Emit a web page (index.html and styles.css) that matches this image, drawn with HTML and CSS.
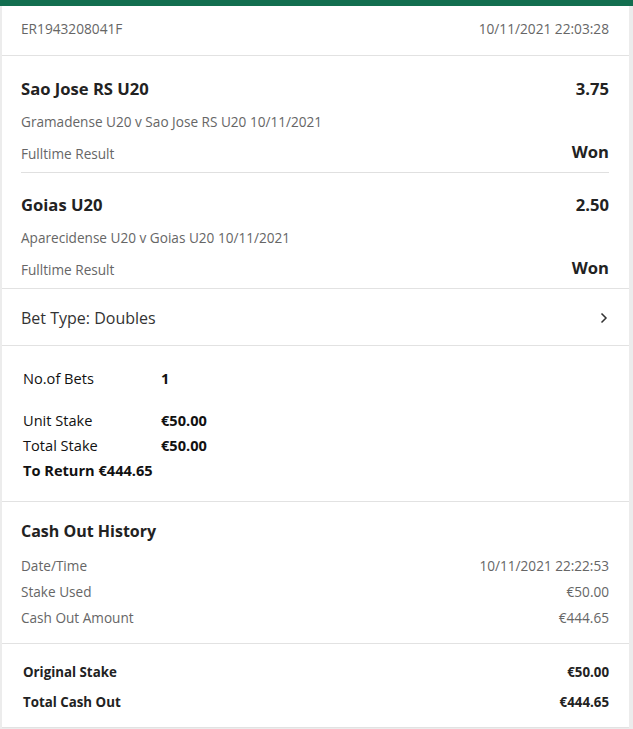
FILE: index.html
```html
<!DOCTYPE html>
<html>
<head>
<meta charset="utf-8">
<link rel="stylesheet" href="styles.css">
</head>
<body>
<div class="topbar"></div>
<div class="card">
  <div class="head">
    <span>ER1943208041F</span>
    <span>10/11/2021 22:03:28</span>
  </div>
  <div class="selections">
    <div class="sel">
      <div class="row"><span class="team">Sao Jose RS U20</span><span class="odds">3.75</span></div>
      <div class="sub">Gramadense U20 v Sao Jose RS U20 10/11/2021</div>
      <div class="row res"><span class="market">Fulltime Result</span><span class="won">Won</span></div>
    </div>
    <div class="sel">
      <div class="row"><span class="team">Goias U20</span><span class="odds">2.50</span></div>
      <div class="sub">Aparecidense U20 v Goias U20 10/11/2021</div>
      <div class="row res"><span class="market">Fulltime Result</span><span class="won">Won</span></div>
    </div>
  </div>
  <div class="bettype">
    <span>Bet Type: Doubles</span>
    <svg class="chev" width="8" height="12" viewBox="0 0 8 12"><polyline points="1.5,1.5 6,6 1.5,10.5" fill="none" stroke="#333" stroke-width="1.5"/></svg>
  </div>
  <div class="summary">
    <div class="srow nob"><span class="lbl">No.of Bets</span><span class="val">1</span></div>
    <div class="srow"><span class="lbl">Unit Stake</span><span class="val">€50.00</span></div>
    <div class="srow"><span class="lbl">Total Stake</span><span class="val">€50.00</span></div>
    <div class="srow ret">To Return €444.65</div>
  </div>
  <div class="history">
    <div class="htitle">Cash Out History</div>
    <div class="hrow"><span>Date/Time</span><span>10/11/2021 22:22:53</span></div>
    <div class="hrow"><span>Stake Used</span><span>€50.00</span></div>
    <div class="hrow"><span>Cash Out Amount</span><span>€444.65</span></div>
  </div>
  <div class="totals">
    <div class="trow"><span>Original Stake</span><span>€50.00</span></div>
    <div class="trow"><span>Total Cash Out</span><span>€444.65</span></div>
  </div>
</div>
</body>
</html>
```

FILE: styles.css
```css
html, body {
  margin: 0;
  padding: 0;
  background: #ececec;
  font-family: "Open Sans", "Noto Sans", sans-serif;
}
.topbar {
  height: 6px;
  background: #126e4f;
}
.card {
  background: #fff;
  margin: 0 4px 0 2px;
  border-bottom: 1px solid #e2e2e2;
}
.card > div {
  border-bottom: 1px solid #e2e2e2;
  padding-left: 19px;
  padding-right: 20px;
}
.card > div:last-child {
  border-bottom: none;
}
.head {
  height: 50px;
  box-sizing: border-box;
  padding-bottom: 5px;
  display: flex;
  justify-content: space-between;
  align-items: center;
  font-size: 13.7px;
  color: #666;
}
.sel {
  padding: 21px 0 9px;
  border-bottom: 1px solid #e0e0e0;
}
.sel:last-child {
  border-bottom: none;
  padding-top: 20px;
  padding-bottom: 9px;
}
.row {
  display: flex;
  justify-content: space-between;
  align-items: center;
}
.team, .odds {
  font-size: 16.6px;
  font-weight: 700;
  color: #222;
  line-height: 24px;
}
.sub {
  font-size: 13.6px;
  color: #666;
  line-height: 20px;
  margin-top: 11px;
}
.res {
  margin-top: 11px;
  height: 20px;
}
.market {
  font-size: 13.6px;
  color: #666;
}
.won {
  font-size: 16.6px;
  font-weight: 700;
  color: #222;
  margin-top: -4px;
}
.bettype {
  height: 57px;
  box-sizing: border-box;
  padding-top: 2px;
  display: flex;
  justify-content: space-between;
  align-items: center;
  font-size: 16px;
  color: #333;
}
.chev {
  margin-right: 1px;
}
.summary {
  padding-top: 20px;
  padding-bottom: 18px;
  font-size: 14.6px;
  color: #111;
}
.srow {
  display: flex;
  line-height: 25px;
  padding-left: 2px;
}
.srow.nob {
  margin-bottom: 17px;
}
.lbl {
  width: 138px;
}
.val {
  font-weight: 700;
}
.ret {
  font-weight: 700;
}
.history {
  padding-top: 17px;
  padding-bottom: 12px;
}
.htitle {
  font-size: 16px;
  font-weight: 700;
  color: #222;
  line-height: 24px;
  margin-bottom: 10px;
}
.hrow {
  display: flex;
  justify-content: space-between;
  font-size: 13.6px;
  color: #666;
  line-height: 26px;
}
.totals {
  padding-top: 13px;
  padding-bottom: 10px;
}
.trow {
  display: flex;
  justify-content: space-between;
  font-size: 13.3px;
  font-weight: 700;
  color: #222;
  line-height: 30px;
  padding-left: 2px;
}
```
